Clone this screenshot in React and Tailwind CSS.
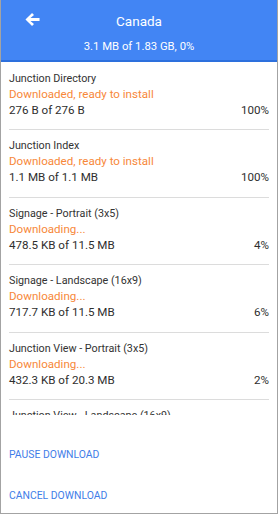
import React from "react";

const items = [
  { title: "Junction Directory", status: "Downloaded, ready to install", size: "276 B of 276 B", pct: "100%" },
  { title: "Junction Index", status: "Downloaded, ready to install", size: "1.1 MB of 1.1 MB", pct: "100%" },
  { title: "Signage - Portrait (3x5)", status: "Downloading...", size: "478.5 KB of 11.5 MB", pct: "4%" },
  { title: "Signage - Landscape (16x9)", status: "Downloading...", size: "717.7 KB of 11.5 MB", pct: "6%" },
  { title: "Junction View - Portrait (3x5)", status: "Downloading...", size: "432.3 KB of 20.3 MB", pct: "2%" },
  { title: "Junction View - Landscape (16x9)", status: "Downloading...", size: "0 B of 20.3 MB", pct: "0%" },
];

export default function App() {
  return (
    <div
      className="w-[278px] h-[514px] bg-white flex flex-col border-x border-b border-[#a3a3a3] overflow-hidden"
      style={{ fontFamily: "Roboto, 'Noto Sans', sans-serif" }}
    >
      <div className="h-[62px] shrink-0 bg-[#4285f4] border-b-2 border-[#2d70dd] relative flex flex-col items-center">
        <svg
          className="absolute left-[24px] top-[12px]"
          width="15"
          height="15"
          viewBox="0 0 16 15"
        >
          <path
            d="M7.5 0.5 L9.6 2.6 L5.8 6 L15.5 6 L15.5 9 L5.8 9 L9.6 12.4 L7.5 14.5 L0.5 7.5 Z"
            fill="white"
          />
        </svg>
        <div className="text-white text-[13.5px] leading-[18px] mt-[12px]">Canada</div>
        <div className="text-white text-[11.3px] leading-[15px] mt-[9px]">3.1 MB of 1.83 GB, 0%</div>
      </div>
      <div className="h-[353px] shrink-0 overflow-hidden px-[8px] pt-[8.5px]">
        {items.map((it, i) => (
          <div
            key={i}
            className={
              (i > 0 ? "border-t border-[#dcdcdc] pt-[8px] " : "") + "pb-[11.5px]"
            }
          >
            <div className="text-[10.75px] leading-[15px] text-[#333333]">{it.title}</div>
            <div className="text-[11.6px] leading-[16px] text-[#f7883a]">{it.status}</div>
            <div className="flex justify-between text-[11.6px] leading-[16px] text-[#2e2e2e]">
              <span>{it.size}</span>
              <span>{it.pct}</span>
            </div>
          </div>
        ))}
      </div>
      <div className="flex flex-col px-[8px]">
        <div className="text-[10.4px] leading-[14px] text-[#3f7de8] mt-[33px]">PAUSE DOWNLOAD</div>
        <div className="text-[10.4px] leading-[14px] text-[#3f7de8] mt-[27px]">CANCEL DOWNLOAD</div>
      </div>
    </div>
  );
}
